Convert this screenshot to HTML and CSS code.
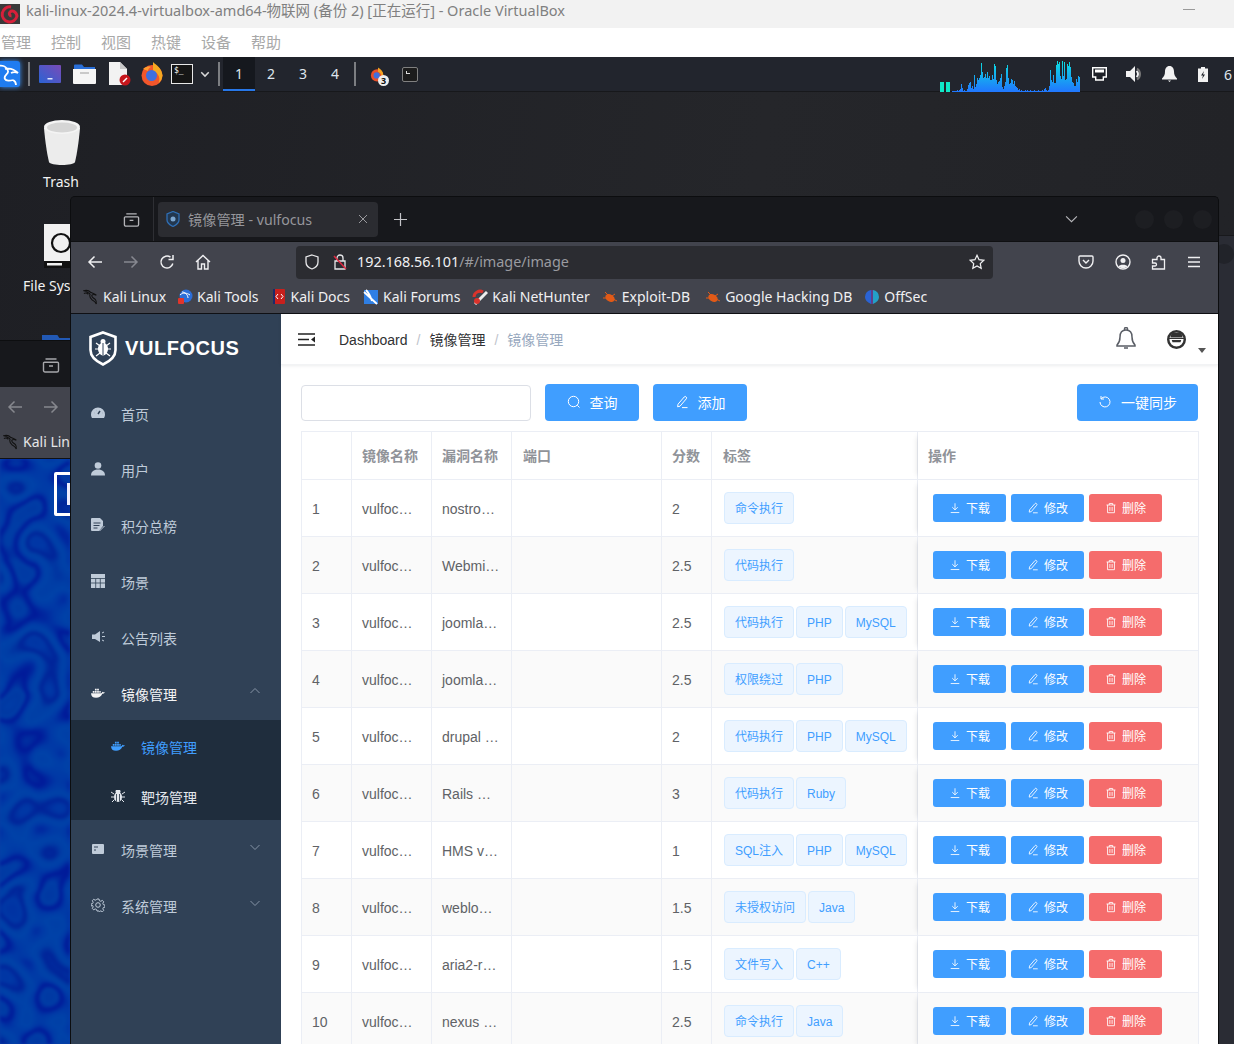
FILE: index.html
```html
<!DOCTYPE html>
<html lang="zh-CN">
<head>
<meta charset="utf-8">
<title>kali-linux - Oracle VirtualBox</title>
<link rel="stylesheet" href="styles.css">
</head>
<body>
<svg class="sprite" xmlns="http://www.w3.org/2000/svg">
  <symbol id="i-dl" viewBox="0 0 14 14"><path d="M7 1.500v7.500M3.800 6L7 9.200 10.200 6M2 12.300h10" fill="none" stroke="currentColor" stroke-width="1"/></symbol>
  <symbol id="i-edit" viewBox="0 0 14 14"><path d="M3 9.200L9.200 2a1.300 1.300 0 0 1 2 0 1.300 1.300 0 0 1 .1 1.800L5 11.200l-2.400.6zM7 12.600h5.500" fill="none" stroke="currentColor" stroke-width="1"/></symbol>
  <symbol id="i-del" viewBox="0 0 14 14"><path d="M1.800 3.500h10.400M5 3.500V1.700h4v1.800M3 3.500v9h8v-9M5.700 5.800v4.600M8.300 5.800v4.600" fill="none" stroke="currentColor" stroke-width="1"/></symbol>
  <symbol id="i-archive" viewBox="0 0 18 18"><path d="M3.500 3h11M2.500 6.200h13a1 1 0 0 1 1 1v7.300a1.500 1.500 0 0 1-1.500 1.500H3A1.500 1.500 0 0 1 1.500 14.500V7.200a1 1 0 0 1 1-1zM7 10h4" fill="none" stroke="currentColor" stroke-width="1.400"/></symbol>
  <symbol id="i-back" viewBox="0 0 16 16"><path d="M15 8H2M7.500 2.500L2 8l5.500 5.500" fill="none" stroke="currentColor" stroke-width="1.500"/></symbol>
  <symbol id="i-fwd" viewBox="0 0 16 16"><path d="M1 8h13M8.500 2.500L14 8l-5.500 5.500" fill="none" stroke="currentColor" stroke-width="1.500"/></symbol>
  <symbol id="i-dragon" viewBox="0 0 18 18"><path d="M1 2c3-1 6 0 8 2 2 1 4 1 6 3-2-1-4-1-5 0-1 2 2 3 4 5 1 1 1 3 1 5-1-3-3-4-5-5-2-2-3-4-2-6C7 4 4 3 1 2zM1 5c2-1 4 0 5 1" fill="none" stroke="#111" stroke-width="1.200"/></symbol>
  <symbol id="i-whale" viewBox="0 0 16 12"><path d="M0 6.200h11.600c.8 0 1.200-.9 1.300-1.700.9.600 1.900.4 3 .5-.8 1.400-1.900 1.700-3 1.800C11.800 10 9 11.500 5.800 11.500 2 11.500.2 9.500 0 6.200z" fill="currentColor"/><path d="M2 3.700h2v2H2zM4.500 3.700h2v2h-2zM7 3.700h2v2H7zM9.500 3.700h1.600v2H9.500zM4.500 1.200h2v2h-2zM7 1.200h2v2H7z" fill="currentColor"/></symbol>
  <symbol id="i-chev" viewBox="0 0 12 12"><path d="M1.500 4l4.500 4.500L10.500 4" fill="none" stroke="currentColor" stroke-width="1"/></symbol>
  <symbol id="i-chevup" viewBox="0 0 12 12"><path d="M1.500 8L6 3.500 10.500 8" fill="none" stroke="currentColor" stroke-width="1"/></symbol>
</svg>

<header class="vm-title">
  <svg class="vm-logo" viewBox="0 0 20 20"><rect width="20" height="20" fill="#3a3a3a"/><path d="M11 3a7.500 7.500 0 1 0 6 9c-1-5-5-6-7-4-1.500 1.500-.5 4 1.500 4" fill="none" stroke="#d8203a" stroke-width="3"/></svg>
  <span class="vm-name">kali-linux-2024.4-virtualbox-amd64-物联网 (备份 2) [正在运行] - Oracle VirtualBox</span>
  <span class="vm-min"></span>
</header>
<nav class="vm-menu"><span>管理</span><span>控制</span><span>视图</span><span>热键</span><span>设备</span><span>帮助</span></nav>

<div class="panel">
  <div class="kali-btn">
    <svg viewBox="0 0 20 26" width="20" height="26"><path d="M-2 5c5-1 9 1 10 5 1 3-5 4-3 8 1 2 5 2 8 1M5 8c4-1 9 0 13 4-2-1-5-1-7 0M13 19c2 1 3 3 3 5" fill="none" stroke="#fff" stroke-width="1.800"/></svg>
  </div>
  <span class="pn-sep first"></span>
  <svg class="pn-icon desk" viewBox="0 0 22 18" width="22" height="18"><defs><linearGradient id="dg" x1="0" y1="1" x2="1" y2="0"><stop offset="0" stop-color="#2a63d4"/><stop offset="1" stop-color="#7a4bb8"/></linearGradient></defs><rect width="22" height="18" rx="1" fill="url(#dg)"/><rect x="8.500" y="13" width="5" height="1.500" fill="#dfe6ff"/></svg>
  <svg class="pn-icon folder" viewBox="0 0 23 20" width="23" height="20"><path d="M1 3V1.500A1 1 0 0 1 2 .5h7l2 2.500h11v3H1z" fill="#2a6fd8"/><path d="M0 5h23v14a1 1 0 0 1-1 1H1a1 1 0 0 1-1-1z" fill="#f5f5f5"/><rect x="7" y="8" width="9" height="2" fill="#c9c9c9"/></svg>
  <svg class="pn-icon file" viewBox="0 0 22 24" width="22" height="24"><path d="M0 0h11l7 7v16H0z" fill="#f2f2f2"/><path d="M11 0l7 7h-7z" fill="#c8c8c8"/><circle cx="16" cy="18" r="5.500" fill="#c6161c"/><path d="M14 20l4-4" stroke="#fff" stroke-width="1.500"/></svg>
  <svg class="pn-icon fox" viewBox="0 0 22 24" width="22" height="24"><circle cx="11" cy="13.500" r="10.500" fill="#f2562b"/><path d="M12 0c3 3 9 6 9.500 13.500-.5 4-2 6-4 7.500 2-4 1-9-5.500-12.500z" fill="#f6a821"/><circle cx="10.500" cy="13.500" r="5.500" fill="#3f6fe0"/><path d="M2 7c2-2 5-3 8-2-2 1-3 2-3 4z" fill="#ff9a2e"/></svg>
  <span class="term-launcher"><span class="term-prompt">$_</span></span>
  <svg class="pn-chev" viewBox="0 0 12 12" width="10" height="10"><path d="M1.500 4L6 8.500 10.500 4" fill="none" stroke="#d8d8d8" stroke-width="1.800"/></svg>
  <span class="pn-sep second"></span>
  <div class="workspaces"><span class="ws active">1</span><span class="ws">2</span><span class="ws">3</span><span class="ws">4</span></div>
  <span class="pn-sep third"></span>
  <span class="win-fox">
    <svg viewBox="0 0 18 18" width="16" height="17"><circle cx="8" cy="10" r="7" fill="#e8502a"/><path d="M9 1c3 2 6 4 6 9-.3 2-1 3-2 4 1-3 0-6-4-8z" fill="#f4a321"/><circle cx="7.500" cy="10" r="3.500" fill="#3f6fe0"/></svg>
    <span class="win-badge">3</span>
  </span>
  <span class="win-term"><span></span></span>

  <svg class="graph" viewBox="0 0 140 34" width="140" height="34">
    <defs><linearGradient id="gg" gradientUnits="userSpaceOnUse" x1="0" y1="3" x2="0" y2="34"><stop offset="0" stop-color="#0be0e0"/><stop offset="1" stop-color="#2176ff"/></linearGradient></defs>
    <rect x="0" y="24" width="4" height="10" fill="#10e8c8"/><rect x="6" y="24" width="4" height="10" fill="#10e8c8"/>
    <path fill="none" stroke="url(#gg)" stroke-width="1" d="M12.500 34v-1m1 1v-1m1 1v-1m1 1v-1m1 1v-1m1 1v-2m1 2v-1m1 1v-2m1 2v-3m1 3v-8m1 8v-4m1 4v-1m1 1v-2m1 2v-1m1 1v-1m1 1v-3m1 3v-7m1 7v-9m1 9v-10m1 10v-4m1 4v-6m1 6v-3m1 3v-17m1 17v-5m1 5v-8m1 8v-14m1 14v-12m1 12v-14m1 14v-17m1 17v-29m1 29v-20m1 20v-14m1 14v-15m1 15v-18m1 18v-14m1 14v-20m1 20v-14m1 14v-16m1 16v-12m1 12v-12m1 12v-17m1 17v-13m1 13v-28m1 28v-26m1 26v-12m1 12v-8m1 8v-10m1 10v-11m1 11v-14m1 14v-18m1 18v-5m1 5v-3m1 3v-6m1 6v-10m1 10v-24m1 24v-27m1 27v-14m1 14v-8m1 8v-9m1 9v-13m1 13v-12m1 12v-8m1 8v-11m1 11v-6m1 6v-5m1 5v-4m1 4v-2m1 2v-3m1 3v-1m1 1v-2m1 2v-1m1 1v-1m1 1v-1m1 1v-2m1 2v-1m1 1v-2m1 2v-1m1 1v-1m1 1v-2m1 2v-1m1 1v-1m1 1v-1m1 1v-2m1 2v-1m1 1v-1m1 1v-1m1 1v-2m1 2v-1m1 1v-1m1 1v-1m1 1v-2m1 2v-1m1 1v-3m1 3v-4m1 4v-2m1 2v-1m1 1v-2m1 2v-6m1 6v-22m1 22v-12m1 12v-10m1 10v-17m1 17v-9m1 9v-9m1 9v-27m1 27v-31m1 31v-28m1 28v-30m1 30v-16m1 16v-13m1 13v-31m1 31v-16m1 16v-30m1 30v-12m1 12v-13m1 13v-28m1 28v-26m1 26v-30m1 30v-25m1 25v-15m1 15v-10m1 10v-9m1 9v-6m1 6v-6m1 6v-13m1 13v-10m1 10v-16m1 16v-15"/>
  </svg>

  <svg class="tray net" viewBox="0 0 15 14" width="15" height="14"><path d="M.7.7h13.600v9.300h-3v3H3.700v-3h-3z" fill="#1d2027" stroke="#fff" stroke-width="1.400"/><path d="M3 2.500h9v3H3z" fill="#fff"/></svg>
  <svg class="tray vol" viewBox="0 0 17 18" width="17" height="18"><path d="M0 6h4l5-5v16l-5-5H0z" fill="#f2f2f2"/><path d="M11 3.500c4 2.500 4 8.500 0 11" fill="none" stroke="#777" stroke-width="2"/><path d="M10.500 6c2 1.500 2 4.500 0 6" fill="none" stroke="#f2f2f2" stroke-width="2"/></svg>
  <svg class="tray bell" viewBox="0 0 15 16" width="15" height="16"><path d="M7.500 0c-3 0-4.500 2.500-4.500 5.500 0 3.500-1 5-3 7v1h15v-1c-2-2-3-3.500-3-7C12 2.500 10.500 0 7.500 0zM6 14.500h3L7.500 16z" fill="#f2f2f2"/></svg>
  <svg class="tray bat" viewBox="0 0 10 15" width="10" height="15"><path d="M3 0h4v1.500h3V15H0V1.500h3z" fill="#f2f2f2"/><path d="M6 4L3 8.500h2L4 12l3-4.500H5z" fill="#1d2027"/></svg>
  <span class="clock">6</span>
</div>

<main class="desktop">
  <div class="desk-item trash">
    <svg viewBox="0 0 36 46" width="36" height="46"><path d="M0 8c1 12 3 26 5 34 1 4 25 4 26 0 2-8 4-22 5-34z" fill="#ececec"/><ellipse cx="18" cy="7" rx="18" ry="7" fill="#f4f4f4"/><ellipse cx="18" cy="7.500" rx="15" ry="5" fill="#d5d5d5"/></svg>
    <span>Trash</span>
  </div>
  <div class="desk-item drive">
    <svg viewBox="0 0 44 44" width="44" height="44"><rect width="44" height="44" fill="#111"/><rect width="44" height="37" fill="#f1f1f1"/><circle cx="17" cy="19" r="9" fill="#f1f1f1" stroke="#111" stroke-width="2.200"/><rect x="3" y="39" width="15" height="2.500" fill="#f1f1f1"/></svg>
    <span>File System</span>
  </div>
  <span class="desk-folder"></span>

  <section class="back-window">
    <div class="bw-tabs"><svg class="bw-arch"><use href="#i-archive"/></svg></div>
    <div class="bw-nav"><svg class="bw-arrow"><use href="#i-back"/></svg><svg class="bw-arrow"><use href="#i-fwd"/></svg></div>
    <div class="bw-marks"><svg class="bm-icon"><use href="#i-dragon"/></svg><span>Kali Linux</span></div>
    <div class="bw-page">
      <svg class="wallpaper" width="70" height="585"><defs><filter id="wf" x="0" y="0" width="100%" height="100%" color-interpolation-filters="sRGB"><feTurbulence type="fractalNoise" baseFrequency=".03" numOctaves="1" seed="7"/><feColorMatrix type="matrix" values="1.800 0 0 0 -.4  1.800 0 0 0 -.4  1.800 0 0 0 -.4  0 0 0 0 1"/><feComponentTransfer><feFuncR type="table" tableValues="0 0 0 0"/><feFuncG type="table" tableValues=".2 .22 .14 .24 .26 .22 .1 .24 .22 .25"/><feFuncB type="table" tableValues=".64 .65 .6 .65 .66 .65 .6 .65 .64 .66"/></feComponentTransfer><feGaussianBlur stdDeviation="1.500"/></filter></defs><rect width="70" height="585" filter="url(#wf)"/></svg>
      <span class="bw-shortcut"></span>
    </div>
  </section>

  <span class="far-window"><i></i></span>

  <section class="browser">
    <div class="tabbar">
      <div class="tb-left"><svg class="tb-arch"><use href="#i-archive"/></svg></div>
      <div class="tab">
        <svg class="fav" viewBox="0 0 14 16" width="14" height="16"><path d="M7 .5l6 2.500v6c0 3-3 5-6 6.500-3-1.500-6-3.500-6-6.500V3z" fill="#22374f" stroke="#2f6fb5" stroke-width="1.300"/><circle cx="7" cy="8" r="2.500" fill="#7da7d0"/></svg>
        <span class="tab-title">镜像管理 - vulfocus</span>
        <svg class="tab-x" viewBox="0 0 10 10" width="10" height="10"><path d="M1 1l8 8M9 1L1 9" stroke="#9a9a9e" stroke-width="1"/></svg>
      </div>
      <svg class="tab-new" viewBox="0 0 14 14" width="13" height="13"><path d="M7 0v14M0 7h14" stroke="#c4c4c8" stroke-width="1.300"/></svg>
      <svg class="tab-list" viewBox="0 0 14 10" width="13" height="9"><path d="M1 1.500l6 6 6-6" fill="none" stroke="#b8b8bc" stroke-width="1.200"/></svg>
      <div class="win-dots"><i></i><i></i><i></i></div>
    </div>

    <div class="navbar">
      <svg class="nb back"><use href="#i-back"/></svg>
      <svg class="nb fwd"><use href="#i-fwd"/></svg>
      <svg class="nb reload" viewBox="0 0 16 16"><path d="M13.800 9.500A6 6 0 1 1 11.500 3.200M14 1v4.500H9.500" fill="none" stroke="currentColor" stroke-width="1.500"/></svg>
      <svg class="nb home" viewBox="0 0 16 16"><path d="M1 8l7-6.500L15 8M3 6.500V15h3.500v-5h3v5H13V6.500" fill="none" stroke="currentColor" stroke-width="1.400"/></svg>
      <div class="urlbar">
        <svg class="u-shield" viewBox="0 0 14 16" width="14" height="16"><path d="M7 1l6 2v5c0 3.500-3 6-6 7-3-1-6-3.500-6-7V3z" fill="none" stroke="#e8e8ea" stroke-width="1.300"/></svg>
        <svg class="u-lock" viewBox="0 0 14 16" width="14" height="16"><path d="M2 7h10v8H2zM4 7V4a3 3 0 0 1 6 0v3" fill="none" stroke="#e8e8ea" stroke-width="1.300"/><path d="M1 2l12 13" stroke="#e0263f" stroke-width="1.500"/></svg>
        <span class="u-text"><b>192.168.56.101</b>/#/image/image</span>
        <svg class="u-star" viewBox="0 0 18 18" width="16" height="16"><path d="M9 1.500l2.300 4.900 5.200.7-3.800 3.700 1 5.300L9 13.500l-4.700 2.600 1-5.300L1.500 7.100l5.200-.7z" fill="none" stroke="#f0f0f2" stroke-width="1.400"/></svg>
      </div>
      <svg class="nb pocket" viewBox="0 0 16 16"><path d="M2 2h12a1 1 0 0 1 1 1v4a7 7 0 0 1-14 0V3a1 1 0 0 1 1-1zM5 6l3 3 3-3" fill="none" stroke="currentColor" stroke-width="1.400"/></svg>
      <svg class="nb profile" viewBox="0 0 16 16"><circle cx="8" cy="8" r="7" fill="none" stroke="currentColor" stroke-width="1.400"/><circle cx="8" cy="6.500" r="2.500" fill="currentColor"/><path d="M3.500 12.500c1-2.500 8-2.500 9 0-2 2-7 2-9 0z" fill="currentColor"/></svg>
      <svg class="nb ext" viewBox="0 0 16 16"><path d="M1.500 5.500H6V4a2 2 0 0 1 4 0v1.500h3.500V15h-12v-3H4a1.500 1.500 0 0 0 0-3H1.500z" fill="none" stroke="currentColor" stroke-width="1.300"/></svg>
      <svg class="nb burger" viewBox="0 0 16 16"><path d="M2 3.500h12M2 8h12M2 12.500h12" stroke="currentColor" stroke-width="1.300"/></svg>
    </div>

    <div class="bookmarks">
      <a class="bm tight"><svg class="bm-icon"><use href="#i-dragon"/></svg>Kali Linux</a>
      <a class="bm"><svg class="bm-icon" viewBox="0 0 16 16"><circle cx="9" cy="7" r="6.500" fill="#2c6ed8"/><path d="M3 6c3-3 7-2 10 0M5 3c3 0 6 3 6 6" fill="none" stroke="#fff" stroke-width="1"/><rect x="1" y="9" width="6" height="6" rx="1" fill="#e0352b"/></svg>Kali Tools</a>
      <a class="bm wide"><svg class="bm-icon" viewBox="0 0 16 16"><rect x="2" width="12" height="15" rx="1" fill="#c8201d"/><path d="M2 0h2v15H2z" fill="#1c2a6b"/><path d="M7 5l-2 2.500L7 10M10 5l2 2.500L10 10" fill="none" stroke="#fff"/></svg>Kali Docs</a>
      <a class="bm"><svg class="bm-icon" viewBox="0 0 16 16"><rect x="1" y="1" width="14" height="14" fill="#2f7fe4"/><path d="M1 3l13 12M3 1c3 3 5 8 6 11" fill="none" stroke="#fff" stroke-width="1.800"/></svg>Kali Forums</a>
      <a class="bm"><svg class="bm-icon" viewBox="0 0 16 16"><path d="M3 15L15 3" stroke="#eee" stroke-width="3"/><path d="M2 8a6 6 0 0 1 9-5" fill="none" stroke="#d9332c" stroke-width="3"/><circle cx="5" cy="12" r="3" fill="#d9332c"/></svg>Kali NetHunter</a>
      <a class="bm wider"><svg class="bm-icon" viewBox="0 0 16 16"><ellipse cx="8" cy="9" rx="5" ry="3.500" fill="#e25a17" transform="rotate(30 8 9)"/><path d="M3 3l3 3M1 9h4M13 5l-3 2M15 12l-4-2" stroke="#e25a17"/></svg>Exploit-DB</a>
      <a class="bm"><svg class="bm-icon" viewBox="0 0 16 16"><ellipse cx="8" cy="9" rx="5" ry="3.500" fill="#e25a17" transform="rotate(30 8 9)"/><path d="M3 3l3 3M1 9h4M13 5l-3 2M15 12l-4-2" stroke="#e25a17"/></svg>Google Hacking DB</a>
      <a class="bm"><svg class="bm-icon" viewBox="0 0 16 16"><path d="M7 1a7 7 0 0 0-6 7c0 3 2 5 6 7z" fill="#2a63d4"/><path d="M9 1a7 7 0 0 1 6 7c0 3-2 5-6 7z" fill="#24a0c8"/><path d="M7.500 1h1v14h-1z" fill="#7a3bc8"/></svg>OffSec</a>
    </div>

    <div class="app">
      <aside class="sidebar">
        <div class="logo">
          <svg viewBox="0 0 30 35" width="30" height="35"><path d="M15 1.500l12.500 4.500v13c0 7-6 11.500-12.500 14.500C8.500 30.500 2.500 26 2.500 19V6z" fill="none" stroke="#fff" stroke-width="2.600"/><ellipse cx="15" cy="18" rx="5" ry="6.500" fill="#fff"/><circle cx="15" cy="10.500" r="2.500" fill="#fff"/><path d="M8 12l4 3M22 12l-4 3M7 18h5M23 18h-5M8 25l4-3M22 25l-4-3" stroke="#fff" stroke-width="1.200"/><path d="M15 12v12" stroke="#304156" stroke-width="1"/></svg>
          <span>VULFOCUS</span>
        </div>
        <ul class="menu">
          <li class="mi"><svg class="mi-ic" viewBox="0 0 14 14"><path d="M7 1.500a7 7 0 0 0-7 7c0 1.500.5 2.700 1 3.500h12c.5-.8 1-2 1-3.500a7 7 0 0 0-7-7z" fill="currentColor"/><path d="M7 8l2-3M3 7h.1M5 4.500h.1M11 7h.1" stroke="#304156" stroke-width="1.500"/></svg><span>首页</span></li>
          <li class="mi"><svg class="mi-ic" viewBox="0 0 14 14"><circle cx="7" cy="3.500" r="3.300" fill="currentColor"/><path d="M0 13.500c0-3.500 2.500-6 7-6s7 2.500 7 6z" fill="currentColor"/></svg><span>用户</span></li>
          <li class="mi"><svg class="mi-ic" viewBox="0 0 14 14"><path d="M1 0h8l3 3v5L8 13H1a1 1 0 0 1-1-1V1a1 1 0 0 1 1-1z" fill="currentColor"/><path d="M2.500 5h7M2.500 7.500h6M2.500 10h4" stroke="#304156"/><path d="M8.500 13l5-5" stroke="currentColor"/></svg><span>积分总榜</span></li>
          <li class="mi"><svg class="mi-ic" viewBox="0 0 14 14"><path d="M0 0h14v14H0z" fill="currentColor"/><path d="M0 4.500h14M0 9h14M4.700 4.500V14M9.300 4.500V14" stroke="#304156" stroke-width=".8"/></svg><span>场景</span></li>
          <li class="mi"><svg class="mi-ic" viewBox="0 0 14 14"><path d="M1 4.500h3L9 1v11L4 9H1z" fill="currentColor"/><path d="M11 3l2-1M11 6.500h3M11 10l2 1" stroke="currentColor"/></svg><span>公告列表</span></li>
          <li class="mi open"><svg class="mi-ic"><use href="#i-whale"/></svg><span>镜像管理</span><svg class="mi-arrow"><use href="#i-chevup"/></svg></li>
          <li>
            <ul class="submenu">
              <li class="si active"><svg class="mi-ic"><use href="#i-whale"/></svg><span>镜像管理</span></li>
              <li class="si"><svg class="mi-ic" viewBox="0 0 14 14"><ellipse cx="7" cy="8" rx="4" ry="5" fill="currentColor"/><path d="M5 1.500h4v2H5zM0 3l3 2M14 3l-3 2M0 8h3M14 8h-3M1 13l2.500-2.500M13 13l-2.500-2.500" fill="currentColor" stroke="currentColor"/><path d="M5.500 5v7.500M8.500 5v7.500" stroke="#1f2d3d" stroke-width=".8"/></svg><span>靶场管理</span></li>
            </ul>
          </li>
          <li class="mi"><svg class="mi-ic" viewBox="0 0 14 14"><rect x="1" y="2" width="12" height="10" rx="1" fill="currentColor"/><path d="M3 5h4M3 8h2" stroke="#304156"/></svg><span>场景管理</span><svg class="mi-arrow"><use href="#i-chev"/></svg></li>
          <li class="mi"><svg class="mi-ic" viewBox="0 0 14 14"><path d="M6 1h2l.4 1.700 1.400.6 1.600-.9 1.300 1.400-.9 1.500.6 1.400 1.600.4v2l-1.600.4-.6 1.400.9 1.500-1.300 1.400-1.600-.9-1.400.6L8 13H6l-.4-1.500-1.400-.6-1.600.9-1.300-1.400.9-1.500-.6-1.400L0 8V6l1.600-.4.600-1.400-.9-1.500 1.300-1.400 1.600.9 1.400-.6z" fill="none" stroke="currentColor"/><circle cx="7" cy="7" r="2.300" fill="none" stroke="currentColor"/></svg><span>系统管理</span><svg class="mi-arrow"><use href="#i-chev"/></svg></li>
        </ul>
      </aside>

      <div class="content">
        <header class="topbar">
          <svg class="hamb" viewBox="0 0 17 13" width="17" height="13"><path d="M0 1h17M0 12h17M0 6.500h11" stroke="#222" stroke-width="1.700"/><path d="M17 3.500v6l-4-3z" fill="#222"/></svg>
          <div class="crumbs"><span>Dashboard</span><i>/</i><span>镜像管理</span><i>/</i><span class="cur">镜像管理</span></div>
          <svg class="tb-bell" viewBox="0 0 20 24" width="20" height="24"><path d="M10 3c-4 0-6 3-6 7 0 4-1 6-3 8v1h18v-1c-2-2-3-4-3-8 0-4-2-7-6-7zM8.500 3V2a1.500 1.500 0 0 1 3 0v1M8 21h4" fill="none" stroke="#5a5e66" stroke-width="1.500"/></svg>
          <svg class="tb-user" viewBox="0 0 20 20" width="19" height="19"><circle cx="10" cy="10" r="8.700" fill="#fff" stroke="#333" stroke-width="2.600"/><path d="M5 3h10l1.500 5h-13z" fill="#333"/><path d="M2 8.500h16v1H2zM5 10.500h10l-.8 2.500H5.800z" fill="#333"/></svg>
          <i class="tb-caret"></i>
        </header>

        <div class="page">
          <div class="toolbar">
            <input class="search" type="text" aria-label="search">
            <button class="btn"><svg class="bi" viewBox="0 0 14 14"><circle cx="6.500" cy="6.500" r="5.200" fill="none" stroke="currentColor"/><path d="M10.300 10.300L12.500 12.500" stroke="currentColor"/></svg>查询</button>
            <button class="btn add"><svg class="bi"><use href="#i-edit"/></svg>添加</button>
            <button class="btn sync"><svg class="bi" viewBox="0 0 14 14"><path d="M3.200 3.700A5 5 0 1 1 2 7M3 1v3h3" fill="none" stroke="currentColor"/></svg>一键同步</button>
          </div>

          <table class="grid">
            <colgroup><col class="c1"><col class="c2"><col class="c3"><col class="c4"><col class="c5"><col class="c6"><col class="c7"></colgroup>
            <thead><tr><th></th><th>镜像名称</th><th>漏洞名称</th><th>端口</th><th>分数</th><th>标签</th><th class="fix">操作</th></tr></thead>
            <tbody>
              <tr><td>1</td><td><div class="clip">vulfoc…</div></td><td><div class="clip">nostro…</div></td><td></td><td>2</td><td><div class="tags"><span class="tag">命令执行</span></div></td><td class="fix"><div class="acts"><button class="sm"><svg class="si-ic"><use href="#i-dl"/></svg>下载</button><button class="sm"><svg class="si-ic"><use href="#i-edit"/></svg>修改</button><button class="sm red"><svg class="si-ic"><use href="#i-del"/></svg>删除</button></div></td></tr>
              <tr><td>2</td><td><div class="clip">vulfoc…</div></td><td><div class="clip">Webmi…</div></td><td></td><td>2.5</td><td><div class="tags"><span class="tag">代码执行</span></div></td><td class="fix"><div class="acts"><button class="sm"><svg class="si-ic"><use href="#i-dl"/></svg>下载</button><button class="sm"><svg class="si-ic"><use href="#i-edit"/></svg>修改</button><button class="sm red"><svg class="si-ic"><use href="#i-del"/></svg>删除</button></div></td></tr>
              <tr><td>3</td><td><div class="clip">vulfoc…</div></td><td><div class="clip">joomla…</div></td><td></td><td>2.5</td><td><div class="tags"><span class="tag">代码执行</span><span class="tag">PHP</span><span class="tag">MySQL</span></div></td><td class="fix"><div class="acts"><button class="sm"><svg class="si-ic"><use href="#i-dl"/></svg>下载</button><button class="sm"><svg class="si-ic"><use href="#i-edit"/></svg>修改</button><button class="sm red"><svg class="si-ic"><use href="#i-del"/></svg>删除</button></div></td></tr>
              <tr><td>4</td><td><div class="clip">vulfoc…</div></td><td><div class="clip">joomla…</div></td><td></td><td>2.5</td><td><div class="tags"><span class="tag">权限绕过</span><span class="tag">PHP</span></div></td><td class="fix"><div class="acts"><button class="sm"><svg class="si-ic"><use href="#i-dl"/></svg>下载</button><button class="sm"><svg class="si-ic"><use href="#i-edit"/></svg>修改</button><button class="sm red"><svg class="si-ic"><use href="#i-del"/></svg>删除</button></div></td></tr>
              <tr><td>5</td><td><div class="clip">vulfoc…</div></td><td><div class="clip">drupal …</div></td><td></td><td>2</td><td><div class="tags"><span class="tag">代码执行</span><span class="tag">PHP</span><span class="tag">MySQL</span></div></td><td class="fix"><div class="acts"><button class="sm"><svg class="si-ic"><use href="#i-dl"/></svg>下载</button><button class="sm"><svg class="si-ic"><use href="#i-edit"/></svg>修改</button><button class="sm red"><svg class="si-ic"><use href="#i-del"/></svg>删除</button></div></td></tr>
              <tr><td>6</td><td><div class="clip">vulfoc…</div></td><td><div class="clip">Rails …</div></td><td></td><td>3</td><td><div class="tags"><span class="tag">代码执行</span><span class="tag">Ruby</span></div></td><td class="fix"><div class="acts"><button class="sm"><svg class="si-ic"><use href="#i-dl"/></svg>下载</button><button class="sm"><svg class="si-ic"><use href="#i-edit"/></svg>修改</button><button class="sm red"><svg class="si-ic"><use href="#i-del"/></svg>删除</button></div></td></tr>
              <tr><td>7</td><td><div class="clip">vulfoc…</div></td><td><div class="clip">HMS v…</div></td><td></td><td>1</td><td><div class="tags"><span class="tag">SQL注入</span><span class="tag">PHP</span><span class="tag">MySQL</span></div></td><td class="fix"><div class="acts"><button class="sm"><svg class="si-ic"><use href="#i-dl"/></svg>下载</button><button class="sm"><svg class="si-ic"><use href="#i-edit"/></svg>修改</button><button class="sm red"><svg class="si-ic"><use href="#i-del"/></svg>删除</button></div></td></tr>
              <tr><td>8</td><td><div class="clip">vulfoc…</div></td><td><div class="clip">weblo…</div></td><td></td><td>1.5</td><td><div class="tags"><span class="tag">未授权访问</span><span class="tag">Java</span></div></td><td class="fix"><div class="acts"><button class="sm"><svg class="si-ic"><use href="#i-dl"/></svg>下载</button><button class="sm"><svg class="si-ic"><use href="#i-edit"/></svg>修改</button><button class="sm red"><svg class="si-ic"><use href="#i-del"/></svg>删除</button></div></td></tr>
              <tr><td>9</td><td><div class="clip">vulfoc…</div></td><td><div class="clip">aria2-r…</div></td><td></td><td>1.5</td><td><div class="tags"><span class="tag">文件写入</span><span class="tag">C++</span></div></td><td class="fix"><div class="acts"><button class="sm"><svg class="si-ic"><use href="#i-dl"/></svg>下载</button><button class="sm"><svg class="si-ic"><use href="#i-edit"/></svg>修改</button><button class="sm red"><svg class="si-ic"><use href="#i-del"/></svg>删除</button></div></td></tr>
              <tr><td>10</td><td><div class="clip">vulfoc…</div></td><td><div class="clip">nexus …</div></td><td></td><td>2.5</td><td><div class="tags"><span class="tag">命令执行</span><span class="tag">Java</span></div></td><td class="fix"><div class="acts"><button class="sm"><svg class="si-ic"><use href="#i-dl"/></svg>下载</button><button class="sm"><svg class="si-ic"><use href="#i-edit"/></svg>修改</button><button class="sm red"><svg class="si-ic"><use href="#i-del"/></svg>删除</button></div></td></tr>
            </tbody>
          </table>
        </div>
      </div>
    </div>
  </section>
</main>
</body>
</html>
```

FILE: styles.css
```css
* { box-sizing: border-box; }
html, body { margin: 0; height: 100%; }
body {
  width: 1234px; height: 1044px; overflow: hidden;
  display: flex; flex-direction: column;
  font-family: "Noto Sans", "Noto Sans CJK SC", sans-serif;
  background: #212226;
}
ul { list-style: none; margin: 0; padding: 0; }
.sprite { display: none; }

/* VirtualBox chrome */
.vm-title { height: 28px; flex: none; background: #f2f2f2; display: flex; align-items: center; padding-bottom: 9px; }
.vm-logo { width: 20px; height: 20px; flex: none; margin-top: 9px; }
.vm-name { margin-left: 6px; font-size: 14.5px; color: #808080; white-space: nowrap; }
.vm-min { width: 12px; height: 1px; background: #9a9a9a; margin-left: auto; margin-right: 39px; }
.vm-menu { height: 29px; flex: none; background: #fff; display: flex; align-items: center; padding-left: 1px; padding-bottom: 2px; font-size: 15px; color: #a8a8a8; }
.vm-menu span { width: 50px; }

/* XFCE panel */
.panel { height: 35px; flex: none; background: #22252d; border-bottom: 1px solid #17181b; display: flex; align-items: center; color: #e4e4e4; }
.kali-btn { width: 20px; height: 26px; background: #1f7cf0; border-radius: 0 3px 3px 0; box-shadow: 0 0 5px #3d96ff; display: flex; overflow: hidden; }
.pn-sep { width: 2px; height: 24px; background: #7c7e82; flex: none; }
.pn-sep.first { margin-left: 8px; }
.pn-sep.second { margin-left: 7px; }
.pn-sep.third { margin-left: 3px; }
.pn-icon { flex: none; }
.desk { margin-left: 9px; }
.folder { margin-left: 12px; }
.file { margin-left: 13px; }
.fox { margin-left: 10px; }
.term-launcher { width: 22px; height: 20px; margin-left: 8px; border: 1px solid #e8e8e8; background: #151515; font: 8px/11px "DejaVu Sans Mono", monospace; color: #fff; padding-left: 2px; }
.term-prompt { display: block; }
.pn-chev { margin-left: 7px; margin-right: 1px; }
.workspaces { display: flex; align-self: stretch; margin-left: 3px; }
.ws { width: 32px; display: flex; align-items: center; justify-content: center; font-size: 14px; color: #dfe6ee; padding-bottom: 1px; }
.ws.active { background: #15181e; box-shadow: inset 0 -2px 0 #2777e8; }
.win-fox { position: relative; margin-left: 14px; width: 20px; display: flex; }
.win-badge { position: absolute; left: 8px; top: 9px; width: 11px; height: 11px; border-radius: 50%; background: #eee; color: #111; font-size: 9px; font-weight: 700; line-height: 11px; text-align: center; }
.win-term { width: 16px; height: 15px; margin-left: 12px; background: #1c1c1c; border: 1px solid #808080; border-radius: 2px; padding: 3px 0 0 3px; display: flex; }
.win-term span { width: 4px; height: 3px; border-left: 1px solid #ddd; border-bottom: 1px solid #ddd; }
.graph { margin-left: auto; align-self: flex-end; margin-bottom: -1px; flex: none; }
.tray { flex: none; }
.net { margin-left: 12px; }
.vol { margin-left: 19px; }
.bell { margin-left: 19px; }
.bat { margin-left: 21px; }
.clock { width: 10px; margin-left: 16px; font-size: 14px; color: #dfe6ee; }

/* Desktop canvas */
.desktop { position: relative; flex: 1; background: linear-gradient(100deg, #1e1f24, #25262a 55%, #212226); overflow: hidden; }
.desk-item { position: absolute; display: flex; flex-direction: column; align-items: center; color: #f2f2f2; font-size: 14px; line-height: 20px; width: 76px; }
.desk-item span { white-space: nowrap; }
.trash { left: 24px; top: 28px; }
.trash span { margin-top: 6px; margin-left: -2px; }
.drive { left: 23px; top: 132px; width: 70px; align-items: flex-start; }
.drive svg { margin-left: 21px; }
.drive span { margin-top: 8px; }
.desk-folder { position: absolute; left: 42px; top: 243px; width: 28px; height: 6px; background: #2259b5; clip-path: polygon(0 100%, 0 0, 55% 0, 62% 50%, 100% 50%, 100% 100%); }

.back-window { position: absolute; left: 0; top: 248px; width: 80px; bottom: 0; border-top: 1px solid #0d0e10; display: flex; flex-direction: column; }
.bw-tabs { height: 46px; background: #17181c; flex: none; position: relative; }
.bw-arch { position: absolute; left: 42px; top: 15px; width: 18px; height: 18px; color: #a6a6aa; }
.bw-nav { height: 43px; background: #42444d; flex: none; display: flex; align-items: center; gap: 20px; padding: 0 0 3px 7px; color: #86888e; }
.bw-arrow { width: 16px; height: 16px; }
.bw-marks { height: 29px; background: #42444d; border-bottom: 1px solid #101114; flex: none; display: flex; align-items: center; gap: 4px; padding: 0 0 5px 3px; color: #e6e6e8; font-size: 14px; white-space: nowrap; }
.bw-page { flex: 1; position: relative; background: #0a3da6; overflow: hidden; }
.wallpaper { display: block; }
.bw-shortcut { position: absolute; left: 54px; top: 13px; width: 30px; height: 44px; border: 3px solid #fff; border-radius: 2px; }
.bw-shortcut::after { content: ""; position: absolute; left: 10px; top: 8px; width: 3px; height: 22px; background: #eef; }
.far-window { position: absolute; left: 1200px; top: 143px; width: 34px; height: 900px; background: #2a2c34; border-top: 1px solid #18191c; }
.far-window i { position: absolute; left: 14px; top: 8px; width: 20px; height: 20px; border-radius: 50%; background: #212329; }

/* Browser window */
.browser { position: absolute; left: 70px; top: 104px; width: 1149px; height: 848px; border: 1px solid #0c0d0f; border-bottom: 0; border-radius: 5px 5px 0 0; background: #17181c; display: flex; flex-direction: column; overflow: hidden; }
.tabbar { height: 45px; flex: none; background: #17181c; display: flex; align-items: center; position: relative; border-bottom: 1px solid #0f1012; }
.tb-left { width: 83px; align-self: stretch; border-right: 1px solid #2e2f34; display: flex; align-items: center; justify-content: flex-end; padding-right: 13px; }
.tb-arch { width: 17px; height: 17px; color: #b4b4b8; }
.tab { width: 220px; height: 35px; margin-left: 4px; background: #2b2c31; border-radius: 4px; display: flex; align-items: center; padding-left: 8px; }
.tab-title { margin-left: 8px; font-size: 14.2px; color: #96969b; white-space: nowrap; }
.tab-x { margin-left: auto; margin-right: 10px; }
.tab-new { margin-left: 16px; }
.tab-list { position: absolute; left: 994px; top: 18px; }
.win-dots { position: absolute; left: 1064px; top: 13px; display: flex; gap: 10px; }
.win-dots i { width: 19px; height: 19px; border-radius: 50%; background: #1d1e22; }

.navbar { height: 43px; flex: none; background: #42444d; display: flex; align-items: center; color: #f0f0f2; padding: 0 0 3px 16px; }
.nb { width: 16px; height: 16px; flex: none; }
.fwd { margin-left: 20px; color: #868890; }
.reload { margin-left: 20px; }
.home { margin-left: 20px; }
.urlbar { width: 697px; height: 33px; margin-left: 85px; background: #2b2c31; border-radius: 4px; display: flex; align-items: center; padding-left: 9px; }
.u-lock { margin-left: 14px; }
.u-text { margin-left: 10px; padding-bottom: 2px; font-size: 14.4px; color: #9a9ba0; white-space: nowrap; }
.u-text b { font-weight: 400; color: #f0f0f2; }
.u-star { margin-left: auto; margin-right: 8px; }
.pocket { margin-left: 85px; }
.profile { margin-left: 21px; }
.ext { margin-left: 20px; }
.burger { margin-left: 19px; }

.bookmarks { height: 29px; flex: none; background: #42444d; border-bottom: 1px solid #0f1014; display: flex; align-items: center; padding: 0 0 5px 12px; gap: 12px; }
.bm { display: flex; align-items: center; gap: 4px; color: #f0f0f2; font-size: 14px; white-space: nowrap; }
.bm.tight { margin-right: -1px; }
.bm.wide { margin-right: 1px; }
.bm.wider { margin-right: 3px; }
.bm-icon { width: 16px; height: 16px; flex: none; }

/* Web app */
.app { flex: 1; display: flex; min-height: 0; font-family: "Liberation Sans", "Noto Sans CJK SC", sans-serif; background: #fff; }
.sidebar { width: 210px; flex: none; background: #304156; }
.logo { height: 70px; display: flex; align-items: center; padding: 0 0 1px 17px; gap: 7px; color: #fff; }
.logo span { font-size: 20px; font-weight: 700; letter-spacing: .55px; }
.mi, .si { display: flex; align-items: center; color: #bfcbd9; font-size: 14px; position: relative; }
.mi { height: 56px; padding-left: 20px; }
.mi-ic { width: 14px; height: 14px; margin-right: 16px; flex: none; position: relative; top: 1px; }
.mi span, .si span { position: relative; top: 2px; }
.mi.open { color: #f4f4f5; }
.mi-arrow { position: absolute; right: 20px; top: 21px; width: 12px; height: 12px; color: #8694a6; }
.submenu { background: #1f2d3d; }
.si { height: 50px; padding-left: 40px; color: #e4e8ee; }
.si.active { color: #409eff; }

.content { flex: 1; min-width: 0; display: flex; flex-direction: column; }
.topbar { height: 51px; flex: none; display: flex; align-items: center; padding-left: 17px; position: relative; box-shadow: 0 1px 3px rgba(0,21,41,.08); border-bottom: 1px solid #f2f3f5; }
.crumbs { margin-left: 24px; display: flex; align-items: center; font-size: 14px; line-height: 20px; color: #303133; padding-top: 1px; }
.crumbs i { font-style: normal; color: #c0c4cc; margin: 0 9px; }
.crumbs .cur { color: #97a8be; }
.tb-bell { margin-left: auto; }
.tb-user { margin-left: 31px; }
.tb-caret { width: 0; height: 0; margin: 23px 12px 0 12px; border: 4px solid transparent; border-top: 5px solid #555; border-bottom: 0; }

.page { padding: 19px 20px 0; }
.toolbar { display: flex; align-items: flex-start; gap: 14px; margin-bottom: 10px; }
.search { width: 230px; height: 36px; margin-top: 1px; border: 1px solid #dcdfe6; border-radius: 4px; background: #fff; }
.btn { width: 94px; height: 37px; border: 0; border-radius: 4px; background: #409eff; color: #fff; font: 14px/20px "Liberation Sans", "Noto Sans CJK SC", sans-serif; display: flex; align-items: center; justify-content: center; gap: 9px; padding: 1px 0 0; }
.bi { width: 14px; height: 14px; flex: none; position: relative; top: -1px; }
.sync { width: 121px; margin-left: auto; }

.grid { width: 897px; table-layout: fixed; border-collapse: separate; border-spacing: 0; border-top: 1px solid #ebeef5; border-left: 1px solid #ebeef5; font-size: 14px; line-height: 20px; color: #606266; }
.c1 { width: 50px; } .c2, .c3 { width: 80px; } .c4 { width: 150px; } .c5 { width: 50px; } .c6 { width: 206px; } .c7 { width: 281px; }
.grid th, .grid td { padding: 0 10px; border-right: 1px solid #ebeef5; border-bottom: 1px solid #ebeef5; text-align: left; background: #fff; }
.grid th { height: 48px; color: #909399; font-weight: 700; font-size: 14px; }
.grid th:nth-child(4), .grid th:nth-child(6) { padding-left: 11px; }
.grid td { height: 57px; padding-top: 1px; }
.grid tbody tr:nth-child(even) td { background: #fafafa; }
.grid .fix { padding-left: 10px; box-shadow: -5px 0 6px -5px rgba(0,0,0,.14); position: relative; }
.grid td.fix { padding: 0 0 0 15px; }
.clip { white-space: nowrap; }
.tags { display: flex; gap: 2px; margin: -1px 0 0 2px; }
.tag { height: 32px; padding: 1px 10px 0; display: inline-flex; align-items: center; background: #ecf5ff; border: 1px solid #d9ecff; border-radius: 4px; color: #409eff; font-size: 12px; line-height: 20px; white-space: nowrap; }
.acts { display: flex; gap: 5px; }
.sm { width: 73px; height: 28px; border: 0; border-radius: 3px; background: #409eff; color: #fff; font: 12px/16px "Liberation Sans", "Noto Sans CJK SC", sans-serif; display: flex; align-items: center; justify-content: center; gap: 5px; padding: 2px 0 0; }
.sm.red { background: #f56c6c; }
.si-ic { width: 12px; height: 12px; flex: none; position: relative; top: -1px; }
```
